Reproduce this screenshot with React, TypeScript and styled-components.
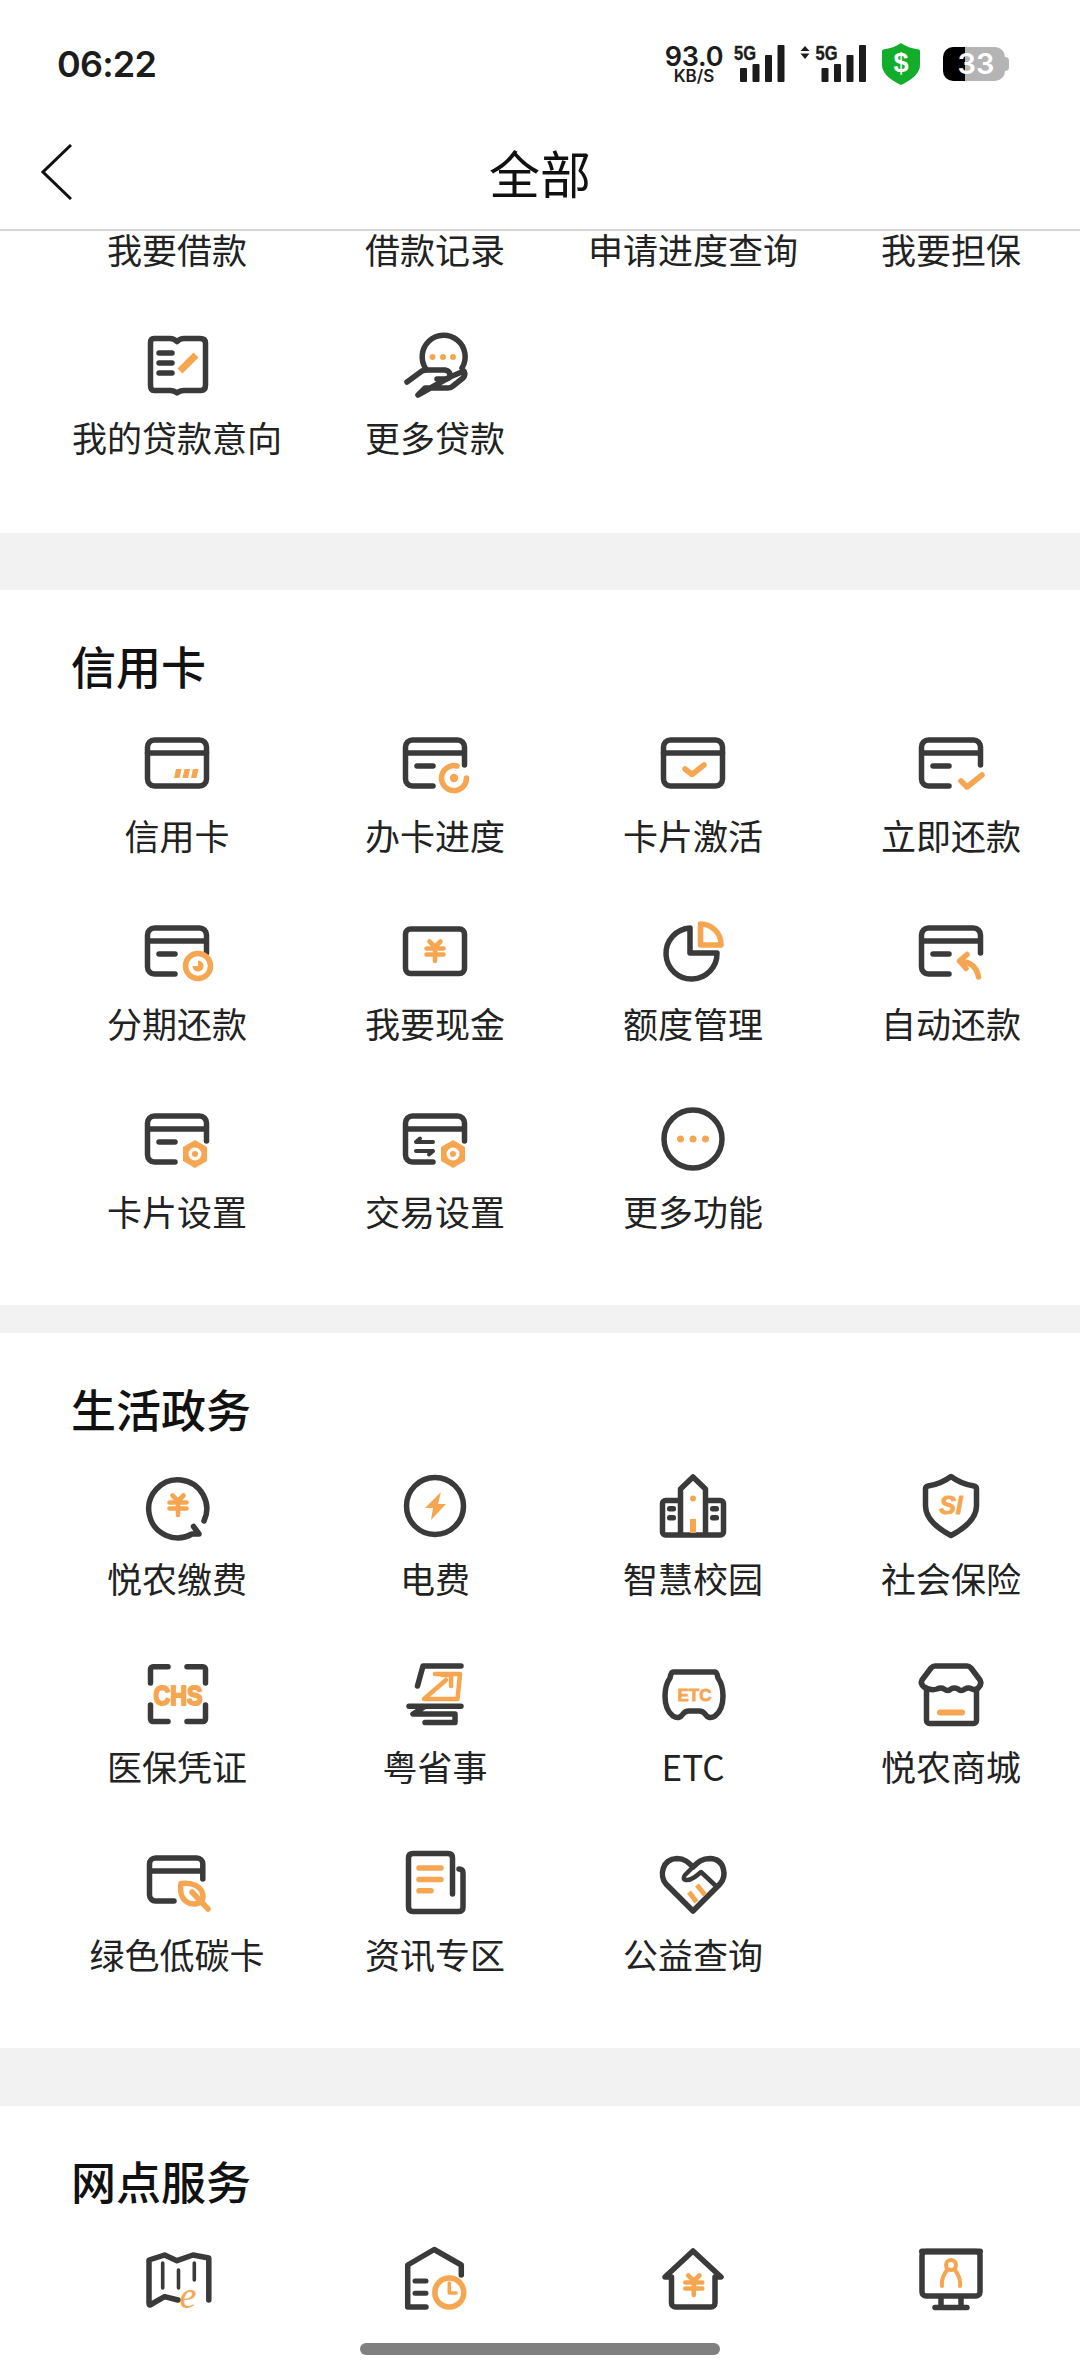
import React from 'react';
import styled, { createGlobalStyle } from 'styled-components';

const GlobalStyle = createGlobalStyle`
  html, body {
    margin: 0;
    padding: 0;
    background: #fff;
  }
  * {
    box-sizing: border-box;
  }
`;

const Page = styled.div`
  position: relative;
  display: flex;
  flex-direction: column;
  width: 1080px;
  height: 2376px;
  overflow: hidden;
  background: #fff;
  font-family: "Noto Sans CJK SC", "Liberation Sans", sans-serif;
  color: #222;
`;

const StatusBar = styled.div`
  display: flex;
  align-items: center;
  justify-content: space-between;
  flex: none;
  height: 128px;
  padding: 0 75px 0 57px;
`;

const Clock = styled.div`
  font-family: Inter, "Liberation Sans", sans-serif;
  font-size: 36px;
  font-weight: 600;
  letter-spacing: -0.8px;
  color: #1c1c1c;
`;

const StatusIcons = styled.div`
  display: flex;
  align-items: center;
  gap: 14px;
`;

const Speed = styled.div`
  display: flex;
  flex-direction: column;
  align-items: center;
  width: 56px;
  margin-right: -2px;
  font-family: Inter, "Liberation Sans", sans-serif;
  font-weight: 600;
  color: #1c1c1c;
`;

const SpeedValue = styled.span`
  font-size: 27px;
  line-height: 24px;
  letter-spacing: -0.3px;
`;

const SpeedUnit = styled.span`
  font-size: 17px;
  line-height: 15px;
`;

const ShieldWrap = styled.svg`
  display: block;
  margin: 0 9px 0 2px;
`;

const Battery = styled.div`
  position: relative;
  display: flex;
  align-items: center;
  justify-content: center;
  width: 62px;
  height: 34px;
  padding-left: 4px;
  border-radius: 10px;
  background: linear-gradient(to right, #000 22px, #b4b4b4 22px);
  font-family: Inter, "Liberation Sans", sans-serif;
  font-size: 29px;
  line-height: 34px;
  font-weight: 600;
  color: #fff;

  &::after {
    content: "";
    position: absolute;
    top: 10px;
    right: -4px;
    width: 4px;
    height: 14px;
    border-radius: 0 4px 4px 0;
    background: #b4b4b4;
  }
`;

const NavBar = styled.div`
  display: grid;
  grid-template-columns: 1fr auto 1fr;
  align-items: center;
  flex: none;
  height: 103px;
  padding: 0 41px 14px;
  border-bottom: 2px solid #d6d6d6;
`;

const NavTitle = styled.div`
  font-size: 51px;
  line-height: 60px;
  color: #111;
`;

const Content = styled.div`
  flex: 1;
  min-height: 0;
`;

const Section = styled.section<{ $top: number; $bottom: number }>`
  padding: ${(p) => p.$top}px 0 ${(p) => p.$bottom}px 48px;
`;

const ScrolledSection = styled(Section)`
  margin-top: -3px;
`;

const Band = styled.div<{ $h: number }>`
  height: ${(p) => p.$h}px;
  background: #f2f2f2;
`;

const SectionTitle = styled.h2`
  margin: 0 0 27px 23px;
  font-size: 45px;
  font-weight: 500;
  line-height: 60px;
  color: #111;
`;

const Grid = styled.div`
  display: grid;
  grid-template-columns: repeat(4, 258px);
  row-gap: 55px;
`;

const Cell = styled.div`
  display: flex;
  flex-direction: column;
  align-items: center;
  gap: 11px;
`;

const Label = styled.span`
  font-size: 35px;
  line-height: 42px;
  white-space: nowrap;
  color: #222;
`;

const IconSvg = styled.svg.attrs({ viewBox: '0 0 80 80', width: 80, height: 80 })`
  display: block;
  fill: none;
  stroke: #3a3a3a;
  stroke-width: 5.5;
  stroke-linecap: round;
  stroke-linejoin: round;

  .o {
    stroke: #f6a650;
  }
  .of {
    fill: #f6a650;
    stroke: none;
  }
  .df {
    fill: #3a3a3a;
    stroke: none;
  }
  .t {
    fill: #f6a650;
    stroke: #f6a650;
    stroke-width: 0.8;
    font-family: "Liberation Sans", sans-serif;
    font-weight: 700;
    text-anchor: middle;
  }
`;

const BottomBar = styled.div`
  position: absolute;
  left: 0;
  right: 0;
  bottom: 0;
  display: flex;
  justify-content: center;
  height: 60px;
  padding-top: 27px;
`;

const HomeIndicator = styled.div`
  width: 360px;
  height: 12px;
  border-radius: 6px;
  background: #808080;
`;

const Signal = ({ arrows }: { arrows?: boolean }) => {
  const dx = arrows ? 21.5 : 6;
  const w = arrows ? 66 : 52;
  return (
    <svg width={w} height={38} viewBox={`0 0 ${w} 38`} style={{ display: 'block', overflow: 'visible' }}>
      {arrows && <path d="M5 1 L9.5 6 H0.5 Z M5 14 L9.5 8.5 H0.5 Z" fill="#1c1c1c" />}
      <text
        x={arrows ? 15.5 : 0}
        y={15}
        fontFamily="Liberation Sans, sans-serif"
        fontWeight={700}
        fontSize={21}
        textLength={22}
        lengthAdjust="spacingAndGlyphs"
        fill="#1c1c1c"
        stroke="#1c1c1c"
        strokeWidth={0.4}
      >
        5G
      </text>
      <rect x={dx} y={23} width={7} height={14} rx={1} fill="#1c1c1c" />
      <rect x={dx + 12.5} y={19} width={7} height={18} rx={1} fill="#1c1c1c" />
      <rect x={dx + 25} y={10} width={7} height={27} rx={1} fill="#1c1c1c" />
      <rect x={dx + 37.5} y={0} width={7} height={37} rx={1} fill="#1c1c1c" />
    </svg>
  );
};

const Shield = () => (
  <ShieldWrap width={38} height={42} viewBox="0 0 38 42">
    <path d="M19 0 Q26 5 37 6.5 Q38 7 38 8 V22 Q38 33 19 42 Q0 33 0 22 V8 Q0 7 1 6.5 Q12 5 19 0 Z" fill="#12ad2b" />
    <text x={19} y={29} textAnchor="middle" fontFamily="Liberation Sans, sans-serif" fontWeight={700} fontSize={27} fill="#fff">
      $
    </text>
  </ShieldWrap>
);

const Yen = ({ x, y }: { x: number; y: number }) => (
  <path
    className="o"
    transform={`translate(${x} ${y})`}
    strokeWidth={4.6}
    d="M-5.5 -9.5 L0 -4 L5.5 -9.5 M-8.5 -2.5 H8.5 M-8.5 3.5 H8.5 M0 -3 V10"
  />
);

const CardOpen = ({ dash = true }: { dash?: boolean }) => (
  <>
    <path d="M69.5 42 V24 a7 7 0 0 0 -7 -7 H17.5 a7 7 0 0 0 -7 7 V56 a7 7 0 0 0 7 7 H38 M10.5 30 H69.5" />
    {dash && <path d="M22 43 H38" />}
  </>
);

const CardFull = () => (
  <>
    <rect x={10.5} y={17} width={59} height={46} rx={7} />
    <path d="M10.5 30 H69.5" />
  </>
);

const Hex = () => (
  <>
    <path className="of" d="M58 41 L70 48 V62 L58 69 L46 62 V48 Z" />
    <circle cx={58} cy={55} r={6.5} fill="#fff" stroke="none" />
    <circle className="of" cx={58} cy={55} r={3} />
  </>
);

const icons: Record<string, React.ReactNode> = {
  book: (
    <>
      <path d="M17 13.5 H33 Q37 13.5 40 16.5 Q43 13.5 47 13.5 H63 Q68.5 13.5 68.5 18 V60 Q68.5 65.5 64 65.5 H47 Q43 65.5 40 68 Q37 65.5 33 65.5 H17 Q13.5 65.5 13.5 60 V18 Q13.5 13.5 17 13.5 Z" />
      <path d="M22 28 H35 M22 38 H35 M22 48 H35" />
      <path className="o" d="M43 46 L59 30" strokeWidth={7} strokeLinecap="butt" />
    </>
  ),
  moreLoan: (
    <>
      <path d="M31 44 A21.5 21.5 0 1 1 67 43" />
      <path d="M12 57 L27 46 Q29 45 33 45 H50 Q55 46 55 50 Q55 54 50 54 H42" />
      <path d="M55 52 L69 46 Q71 50 68 53 L58 61 Q56 63 53 63 H30 L23 70 Z" />
      <circle className="of" cx={37.5} cy={32} r={3} />
      <circle className="of" cx={48} cy={32} r={3} />
      <circle className="of" cx={58} cy={32} r={3} />
    </>
  ),
  credit: (
    <>
      <CardFull />
      <path className="of" d="M39 46 H44.5 L42.5 55 H37 Z M47.5 46 H53 L51 55 H45.5 Z M56 46 H61.5 L59.5 55 H54 Z" />
    </>
  ),
  apply: (
    <>
      <CardOpen />
      <path className="o" d="M71.5 55 A12.5 12.5 0 1 1 62 43" />
      <circle className="of" cx={59} cy={55} r={4.2} />
    </>
  ),
  activate: (
    <>
      <CardFull />
      <path className="o" d="M32 46 L39 51.5 L51 42" strokeWidth={5.5} />
    </>
  ),
  repay: (
    <>
      <CardOpen />
      <path className="o" d="M50 58 L56 64 L71 52" strokeWidth={5.5} />
    </>
  ),
  instalment: (
    <>
      <CardOpen />
      <circle className="o" cx={61} cy={55} r={12.5} fill="#fff" />
      <path className="of" d="M61 55 V49.5 A5.5 5.5 0 1 1 55.5 55 Z" />
    </>
  ),
  cash: (
    <>
      <rect x={10.5} y={18} width={59} height={44.5} rx={5} />
      <Yen x={40} y={40} />
    </>
  ),
  quota: (
    <>
      <path d="M37 17 A25.5 25.5 0 1 0 64 42 H37 Z" />
      <path className="o" d="M47.5 13 A20.5 20.5 0 0 1 68 34 H47.5 Z" />
    </>
  ),
  auto: (
    <>
      <CardOpen />
      <path className="o" d="M67.5 66 C66 57 60 51 49 50 M56 43.5 L48.5 50 L55 57.5" strokeWidth={5.5} />
    </>
  ),
  cardSet: (
    <>
      <CardOpen />
      <Hex />
    </>
  ),
  tradeSet: (
    <>
      <CardOpen dash={false} />
      <path d="M21 43 H38 M21 43 L25 39.5 M21 52 H38 M38 52 L34 55.5" strokeWidth={4} />
      <Hex />
    </>
  ),
  more: (
    <>
      <circle cx={40} cy={40} r={29} />
      <circle className="of" cx={27.5} cy={40} r={3.5} />
      <circle className="of" cx={40} cy={40} r={3.5} />
      <circle className="of" cx={52.5} cy={40} r={3.5} />
    </>
  ),
  pay: (
    <>
      <path d="M67 55 A29 29 0 1 0 55 68 H62 L56.5 60.5" />
      <Yen x={41} y={39} />
    </>
  ),
  power: (
    <>
      <circle cx={40} cy={40} r={28.5} />
      <path className="of" d="M46 26 L30 42 H38 L36 54 L51 38 H43 Z" stroke="#f6a650" strokeWidth={2} />
    </>
  ),
  campus: (
    <>
      <path d="M27.5 68 V23 L40 11 L52.5 23 V68" />
      <path d="M27 34.5 H12.5 a3 3 0 0 0 -3 3 V66 a3 3 0 0 0 3 3 H67.5 a3 3 0 0 0 3 -3 V37.5 a3 3 0 0 0 -3 -3 H53" />
      <rect className="df" x={14} y={40} width={9} height={5.5} rx={2.5} />
      <rect className="df" x={14} y={49} width={9} height={5.5} rx={2.5} />
      <rect className="df" x={57} y={40} width={9} height={5.5} rx={2.5} />
      <rect className="df" x={57} y={49} width={9} height={5.5} rx={2.5} />
      <circle className="of" cx={40} cy={32.5} r={3} />
      <path className="o" d="M40 67 V53" strokeWidth={6} strokeLinecap="butt" />
    </>
  ),
  insure: (
    <>
      <path d="M40 10.5 Q50 18 63 20 Q65.5 20.5 65.5 23 V40 Q65.5 56 40 69.5 Q14.5 56 14.5 40 V23 Q14.5 20.5 17 20 Q30 18 40 10.5 Z" />
      <text className="t" x={40} y={47.5} fontSize={25} fontStyle="italic">SI</text>
    </>
  ),
  chs: (
    <>
      <path d="M31 12.8 H16 a2.5 2.5 0 0 0 -2.5 2.5 V29 M13.5 51 V65 a2.5 2.5 0 0 0 2.5 2.5 H31 M50 12.8 H66 a2.5 2.5 0 0 1 2.5 2.5 V29 M68.5 51 V65 a2.5 2.5 0 0 1 -2.5 2.5 H50" />
      <text className="t" x={41} y={50.5} fontSize={27} textLength={49} lengthAdjust="spacingAndGlyphs" style={{ strokeWidth: 2 }}>CHS</text>
    </>
  ),
  yue: (
    <>
      <path d="M66 12 H28 L22.5 32" />
      <path className="o" d="M40 20 H65 L62.5 45 H29 L51 26 M47 21 H56 V32" strokeWidth={4.5} />
      <path d="M14 52.2 H66 M29 53 L18 60 H60 V68.5 H30" />
    </>
  ),
  etc: (
    <>
      <path d="M20 18 H62 Q64 18 65 24 Q70 31 70 42 Q70 56 62 62 Q56 66 52 60 Q50 57 46 57 H36 Q32 57 30 60 Q26 66 20 62 Q12 56 12 42 Q12 31 17 24 Q18 18 20 18 Z" />
      <text className="t" x={41.5} y={46.5} fontSize={17}>ETC</text>
    </>
  ),
  shop: (
    <>
      <path d="M24 12 H56 Q58 12 60 14 L69 26 Q71 30 68 33 Q65 37 61 35 Q57 33 54 35 Q50 38 47 35 Q43 33 40 35 Q37 38 33 35 Q30 33 26 35 Q20 37 13 33 Q9 30 11 26 L20 14 Q22 12 24 12 Z" />
      <path d="M15.5 36 V66.5 a3 3 0 0 0 3 3 H62.5 a3 3 0 0 0 3 -3 V36" />
      <path className="o" d="M29 58.4 H51" strokeWidth={6} />
    </>
  ),
  green: (
    <>
      <path d="M65.8 37 V22 a6 6 0 0 0 -6 -6 H18.5 a6 6 0 0 0 -6 6 V53 a6 6 0 0 0 6 6 H37 M12.5 29 H65.8" />
      <path className="o" fill="#fff" d="M44 41.5 C55 40 66 44 66 55 C66 62 56 64 50 60 C45 57 42.5 50 44 41.5 Z" />
      <path className="o" d="M55 50 L71 67" />
    </>
  ),
  news: (
    <>
      <path d="M57.5 52 V16 Q57.5 11.5 53 11.5 H18 Q13.5 11.5 13.5 16 V65 Q13.5 69.5 18 69.5 H64 Q68 69.5 68 65 V31 Q68 27 64 27" />
      <path className="o" d="M24 26 H46 M24 37.4 H46 M24 48.8 H36" />
    </>
  ),
  charity: (
    <>
      <path d="M40 69 L13 42 C6 34 9 17 24 16.5 C32 16.5 36 21 40 25 C45 20 49 16.5 57 16.5 C72 17 74 34 67 42 Z" />
      <path d="M41 24 L32 33 Q29 37 33 38 Q38 39 48 30 L64 45" strokeWidth={4.5} />
      <path className="o" d="M36 50 L43.5 60 M44 43 L52 53" strokeWidth={5} strokeLinecap="butt" />
    </>
  ),
  map: (
    <>
      <path d="M41 62 L27.6 58.7 L13 67 Q12 67 12 65 V22 L27.6 17 L40 22.7 L56 17 L71.8 20 V62" />
      <path d="M25.7 25 V50 M41.5 32 V50 M57.3 25 V42" strokeWidth={3.6} />
      <text className="t" x={51} y={70} fontSize={38} fontStyle="italic" style={{ fontFamily: '"Liberation Serif", serif', fontWeight: 400, strokeWidth: 0.2 }}>e</text>
    </>
  ),
  appoint: (
    <>
      <path d="M66.3 37 V27 L39.2 11.5 L12.7 27 V69 H31" />
      <path d="M20 43 H31 M20 55.3 H31" strokeWidth={5} />
      <circle className="o" cx={54.3} cy={54.5} r={14.5} fill="#fff" />
      <path className="o" d="M54.3 45 V55 H61" strokeWidth={3.6} />
    </>
  ),
  branch: (
    <>
      <path d="M18.5 39 H12 L40 13 L68 39 H62 V65 a4 4 0 0 1 -4 4 H22.5 a4 4 0 0 1 -4 -4 Z" />
      <Yen x={40.8} y={47} />
    </>
  ),
  screen: (
    <>
      <rect x={11} y={13.5} width={58} height={44.5} rx={4} />
      <path d="M11 13.5 H69" strokeWidth={6} />
      <path d="M30 60 V68 M50 60 V68 M24 69.5 H56" />
      <circle className="o" cx={40} cy={27} r={5} strokeWidth={4} />
      <path className="o" d="M36 32 Q30 40 31 48 M44 32 Q50 40 49 48" strokeWidth={4} />
    </>
  ),
};

const Item = ({ label, icon }: { label?: string; icon?: string }) => (
  <Cell>
    {icon && <IconSvg>{icons[icon]}</IconSvg>}
    {label && <Label>{label}</Label>}
  </Cell>
);

const loanRows: [string, string?][] = [
  ['我要借款'],
  ['借款记录'],
  ['申请进度查询'],
  ['我要担保'],
  ['我的贷款意向', 'book'],
  ['更多贷款', 'moreLoan'],
];

const cardRows: [string, string][] = [
  ['信用卡', 'credit'],
  ['办卡进度', 'apply'],
  ['卡片激活', 'activate'],
  ['立即还款', 'repay'],
  ['分期还款', 'instalment'],
  ['我要现金', 'cash'],
  ['额度管理', 'quota'],
  ['自动还款', 'auto'],
  ['卡片设置', 'cardSet'],
  ['交易设置', 'tradeSet'],
  ['更多功能', 'more'],
];

const lifeRows: [string, string][] = [
  ['悦农缴费', 'pay'],
  ['电费', 'power'],
  ['智慧校园', 'campus'],
  ['社会保险', 'insure'],
  ['医保凭证', 'chs'],
  ['粤省事', 'yue'],
  ['ETC', 'etc'],
  ['悦农商城', 'shop'],
  ['绿色低碳卡', 'green'],
  ['资讯专区', 'news'],
  ['公益查询', 'charity'],
];

function App() {
  return (
    <Page>
      <GlobalStyle />
      <StatusBar>
        <Clock>06:22</Clock>
        <StatusIcons>
          <Speed>
            <SpeedValue>93.0</SpeedValue>
            <SpeedUnit>KB/S</SpeedUnit>
          </Speed>
          <Signal />
          <Signal arrows />
          <Shield />
          <Battery>33</Battery>
        </StatusIcons>
      </StatusBar>
      <NavBar>
        <svg width={31} height={56} viewBox="0 0 31 56" fill="none" stroke="#111" strokeWidth={3}>
          <path d="M30 1 L2 28 L30 55" />
        </svg>
        <NavTitle>全部</NavTitle>
      </NavBar>
      <Content>
        <ScrolledSection $top={0} $bottom={75}>
          <Grid>
            {loanRows.map(([label, icon]) => (
              <Item key={label} label={label} icon={icon} />
            ))}
          </Grid>
        </ScrolledSection>
        <Band $h={57} />
        <Section $top={46} $bottom={73}>
          <SectionTitle>信用卡</SectionTitle>
          <Grid>
            {cardRows.map(([label, icon]) => (
              <Item key={label} label={label} icon={icon} />
            ))}
          </Grid>
        </Section>
        <Band $h={28} />
        <Section $top={46} $bottom={73}>
          <SectionTitle>生活政务</SectionTitle>
          <Grid>
            {lifeRows.map(([label, icon]) => (
              <Item key={label} label={label} icon={icon} />
            ))}
          </Grid>
        </Section>
        <Band $h={58} />
        <Section $top={45} $bottom={0}>
          <SectionTitle>网点服务</SectionTitle>
          <Grid>
            <Item icon="map" />
            <Item icon="appoint" />
            <Item icon="branch" />
            <Item icon="screen" />
          </Grid>
        </Section>
      </Content>
      <BottomBar>
        <HomeIndicator />
      </BottomBar>
    </Page>
  );
}

export default App;
